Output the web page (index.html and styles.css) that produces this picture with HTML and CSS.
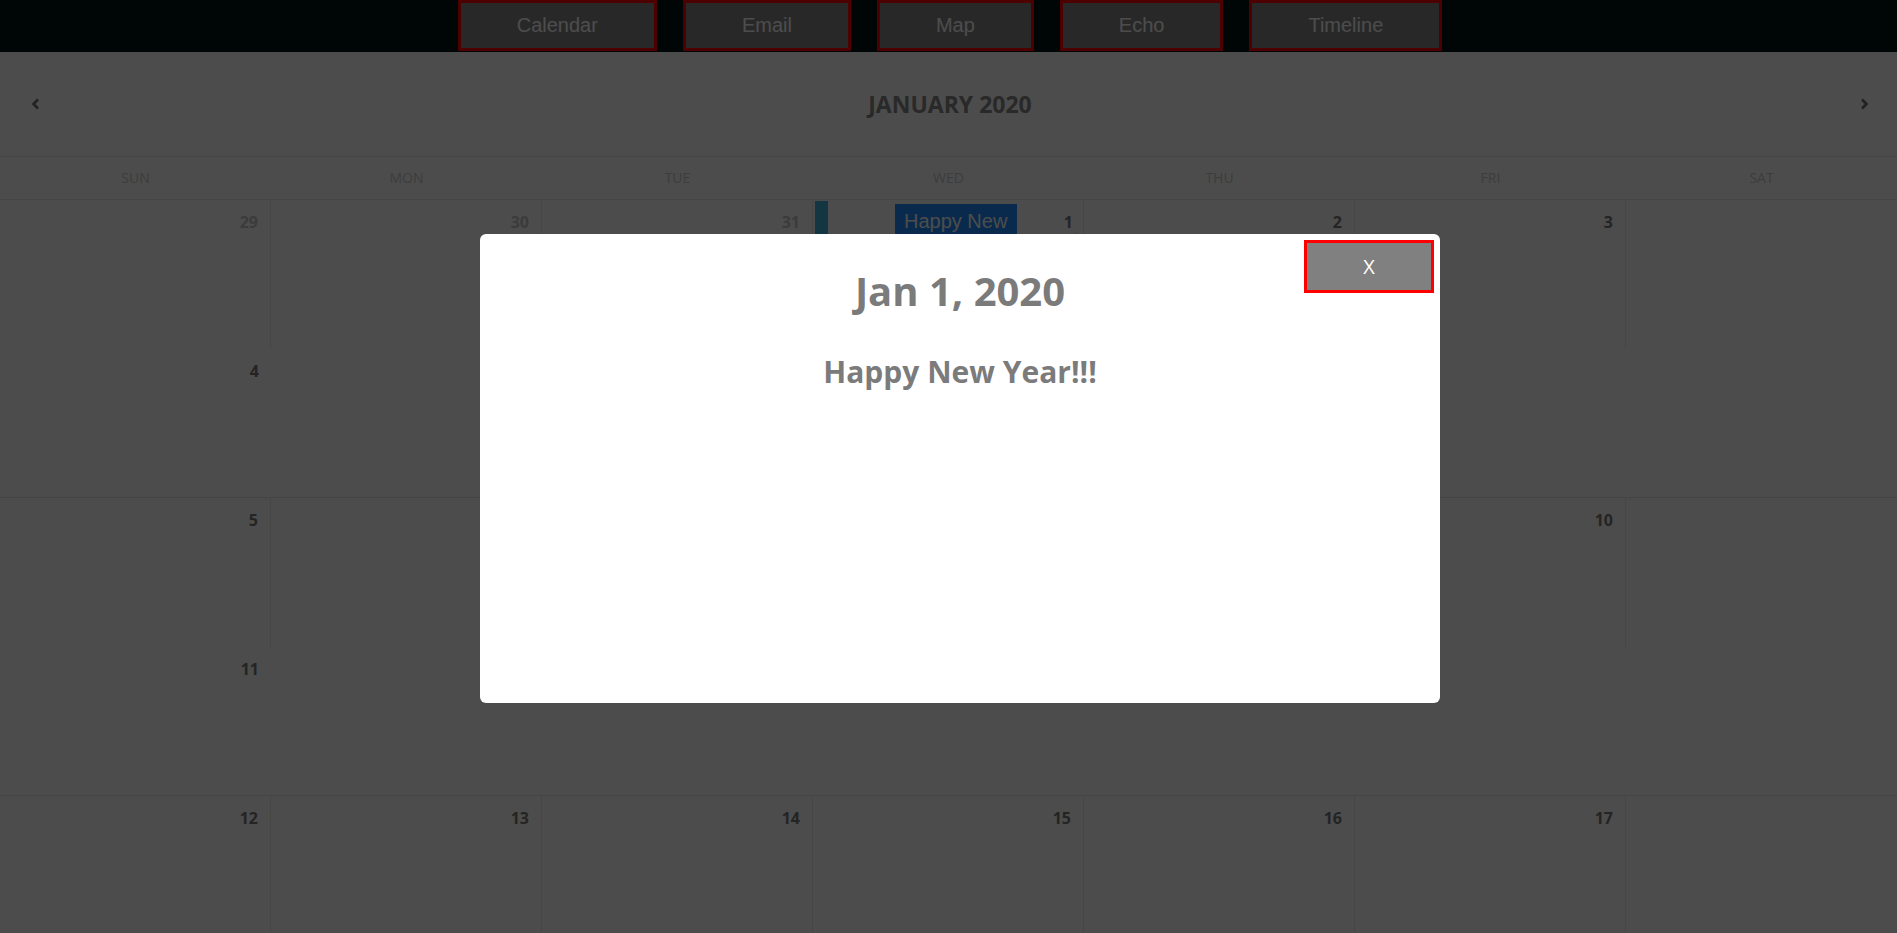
FILE: index.html
```html
<!DOCTYPE html>
<html lang="en">
<head>
<meta charset="utf-8">
<title>Calendar</title>
<link rel="stylesheet" href="styles.css">
</head>
<body>
<nav class="topnav">
  <button class="nav-btn">Calendar</button>
  <button class="nav-btn">Email</button>
  <button class="nav-btn">Map</button>
  <button class="nav-btn">Echo</button>
  <button class="nav-btn">Timeline</button>
</nav>

<main class="calendar">
  <header class="cal-header">
    <button class="cal-arrow" aria-label="Previous month">
      <svg width="10" height="12" viewBox="0 0 10 12"><polyline points="7,1.5 2.5,6 7,10.5" fill="none" stroke="currentColor" stroke-width="2.6"/></svg>
    </button>
    <h2 class="cal-title">JANUARY 2020</h2>
    <button class="cal-arrow" aria-label="Next month">
      <svg width="10" height="12" viewBox="0 0 10 12"><polyline points="3,1.5 7.5,6 3,10.5" fill="none" stroke="currentColor" stroke-width="2.6"/></svg>
    </button>
  </header>

  <div class="weekdays">
    <div>Sun</div><div>Mon</div><div>Tue</div><div>Wed</div><div>Thu</div><div>Fri</div><div>Sat</div>
  </div>

  <div class="week">
    <div class="day other">29</div>
    <div class="day other">30</div>
    <div class="day other">31</div>
    <div class="day has-event">
      <span class="event-bar"></span>
      <span class="event-box">Happy New Year!!!</span>
      <span class="num">1</span>
    </div>
    <div class="day">2</div>
    <div class="day">3</div>
    <div class="day sat">4</div>
  </div>

  <div class="week">
    <div class="day">5</div>
    <div class="day">6</div>
    <div class="day">7</div>
    <div class="day">8</div>
    <div class="day">9</div>
    <div class="day">10</div>
    <div class="day sat">11</div>
  </div>

  <div class="week">
    <div class="day">12</div>
    <div class="day">13</div>
    <div class="day">14</div>
    <div class="day">15</div>
    <div class="day">16</div>
    <div class="day">17</div>
    <div class="day sat">18</div>
  </div>
</main>

<div class="overlay"></div>
<section class="modal">
  <button class="modal-close">X</button>
  <h1 class="modal-title">Jan 1, 2020</h1>
  <p class="modal-text">Happy New Year!!!</p>
</section>
</body>
</html>
```

FILE: styles.css
```css
html, body {
  margin: 0;
  height: 100%;
  overflow: hidden;
}

body {
  font-family: "Open Sans", "Noto Sans", sans-serif;
  background: #ffffff;
}

/* top navigation */
.topnav {
  height: 52px;
  background: #001414;
  display: flex;
  justify-content: center;
  align-items: flex-start;
  gap: 26px;
  padding-left: 3px;
}

.nav-btn {
  box-sizing: border-box;
  height: 51px;
  padding: 0 56px;
  border: 3px solid #ff0000;
  background: #888888;
  color: #ffffff;
  font-family: "Liberation Sans", Arial, sans-serif;
  font-size: 20px;
}

/* calendar */
.cal-header {
  height: 104px;
  border-bottom: 1px solid #e6e6e6;
  display: flex;
  align-items: center;
  justify-content: space-between;
  padding: 0 27px 0 30px;
}

.cal-arrow {
  border: 0;
  background: none;
  padding: 0;
  width: 12px;
  height: 14px;
  display: flex;
  align-items: center;
  justify-content: center;
  color: #707070;
}

.cal-title {
  margin: 0;
  font-size: 23px;
  font-weight: 700;
  color: #8a8a8a;
}

.weekdays {
  height: 42px;
  border-bottom: 1px solid #e6e6e6;
  display: grid;
  grid-template-columns: repeat(7, 1fr);
  line-height: 42px;
  text-align: center;
  font-size: 14px;
  text-transform: uppercase;
  color: #cccccc;
}

.week {
  display: grid;
  grid-template-columns: repeat(7, 1fr);
  grid-template-rows: 149px 148px;
  border-bottom: 1px solid #e6e6e6;
}

.day {
  box-sizing: border-box;
  border-right: 1px solid #ececec;
  padding: 10px 12px;
  text-align: right;
  font-size: 16px;
  line-height: 24px;
  font-weight: 700;
  color: #787878;
}

.day.other {
  color: #c6c6c6;
}

.day.sat {
  grid-column: 1;
  grid-row: 2;
  border-right: none;
}

.day.has-event {
  display: flex;
  align-items: flex-start;
  padding: 0 0 0 2px;
  overflow: hidden;
}

.event-bar {
  flex: none;
  width: 13px;
  height: 100%;
  margin-top: 1px;
  background: #45b4e0;
}

.event-box {
  flex: none;
  box-sizing: border-box;
  width: 122px;
  margin: 4px 0 0 67px;
  padding: 6px 9px 0;
  background: #1e8cff;
  color: #ffffff;
  font-family: "Liberation Sans", Arial, sans-serif;
  font-size: 20px;
  font-weight: 400;
  line-height: 23px;
  text-align: left;
}

.has-event .num {
  flex: none;
  box-sizing: border-box;
  width: 59px;
  height: 100%;
  margin: 1px 0 0 2px;
  padding: 9px 5px 0 0;
  text-align: right;
  background: linear-gradient(135deg, #ffffff 0 42%, #f3f3f3 42% 100%);
}

/* modal */
.overlay {
  position: fixed;
  inset: 0;
  background: rgba(0, 0, 0, 0.7);
}

.modal {
  position: fixed;
  left: 480px;
  top: 234px;
  width: 960px;
  height: 469px;
  background: #ffffff;
  border-radius: 6px;
  text-align: center;
  color: #7b7b7b;
}

.modal-close {
  position: absolute;
  top: 6px;
  right: 6px;
  box-sizing: border-box;
  width: 130px;
  height: 53px;
  border: 3px solid #ff0000;
  background: #808080;
  color: #ffffff;
  font-family: "Open Sans", sans-serif;
  font-size: 20px;
}

.modal-title {
  margin: 33px 0 0;
  font-size: 40px;
  line-height: 48px;
  font-weight: 700;
}

.modal-text {
  margin: 39px 0 0;
  font-size: 30px;
  line-height: 36px;
  font-weight: 700;
}
```
